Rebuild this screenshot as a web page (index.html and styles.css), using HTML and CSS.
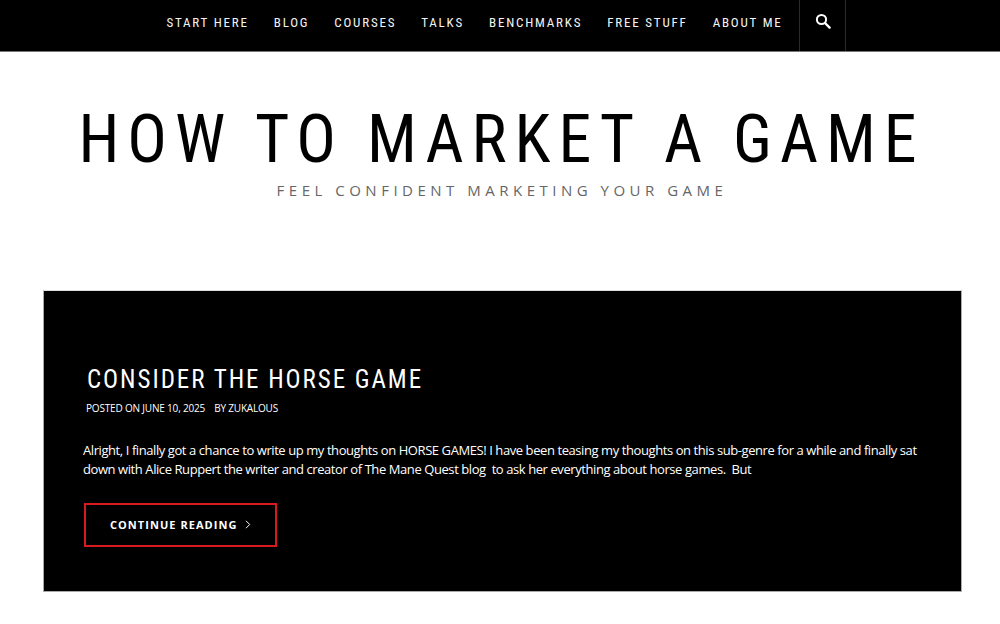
FILE: index.html
```html
<!DOCTYPE html>
<html lang="en">

<head>
    <meta charset="UTF-8">
    <meta name="viewport" content="width=device-width, initial-scale=1.0">
    <title>How To Market A Game</title>
    <link rel="stylesheet" href="styles.css">
</head>

<body>
    <nav class="topbar">
        <ul class="menu">
            <li><a href="#">Start Here</a></li>
            <li><a href="#">Blog</a></li>
            <li><a href="#">Courses</a></li>
            <li><a href="#">Talks</a></li>
            <li><a href="#">Benchmarks</a></li>
            <li><a href="#">Free Stuff</a></li>
            <li><a href="#">About Me</a></li>
        </ul>
        <button class="searchbtn" aria-label="Search">
            <svg width="16" height="16" viewBox="0 0 16 16">
                <circle cx="6.5" cy="6.5" r="4.6" fill="none" stroke="#fff" stroke-width="2"></circle>
                <path d="M10 10l4.6 4.6" stroke="#fff" stroke-width="2.4" stroke-linecap="round"></path>
            </svg>
        </button>
    </nav>

    <header class="masthead">
        <h1 class="sitename">How To Market A Game</h1>
        <p class="tagline">Feel confident marketing your game</p>
    </header>

    <main class="content">
        <article class="post">
            <h2 class="posttitle">Consider the Horse Game</h2>
            <div class="postmeta">
                <span>Posted on June 10, 2025</span>
                <span>By Zukalous</span>
            </div>
            <p class="excerpt">Alright, I finally got a chance to write up my thoughts on HORSE GAMES! I have been teasing my thoughts on this sub-genre for a while and finally sat down with Alice Ruppert the writer and creator of The Mane Quest blog&nbsp; to ask her everything about horse games.&nbsp; But</p>
            <a class="readmore" href="#">Continue Reading
                <svg width="6" height="9" viewBox="0 0 6 9">
                    <path d="M1 .8l3.7 3.7L1 8.2" fill="none" stroke="#fff" stroke-width="1"></path>
                </svg>
            </a>
        </article>
    </main>
</body>

</html>
```

FILE: styles.css
```css
* {
    margin: 0;
    padding: 0;
    box-sizing: border-box;
}

body {
    background-color: #fff;
    font-family: "Open Sans", "Liberation Sans", sans-serif;
    color: #000;
}

a {
    color: inherit;
    text-decoration: none;
}

.topbar {
    display: flex;
    justify-content: center;
    height: 52px;
    padding-left: 12px;
    background-color: #000;
    border-bottom: 1px solid #777;
}

.menu {
    display: flex;
    gap: 25px;
    align-items: center;
    list-style: none;
    padding: 0 16px 9px 0;
}

.menu a {
    font-family: "Roboto", sans-serif;
    font-stretch: 75%;
    font-size: 13px;
    letter-spacing: 1.8px;
    text-transform: uppercase;
    color: #f4f4f4;
}

.searchbtn {
    width: 47px;
    height: 51px;
    padding: 0 0 6px 1px;
    background: none;
    border: solid #2a2a2a;
    border-width: 0 1px;
}

.masthead {
    height: 238px;
    padding: 50px 0 0 3px;
    text-align: center;
}

.sitename {
    font-family: "Roboto", sans-serif;
    font-stretch: 75%;
    font-weight: 400;
    font-size: 66px;
    line-height: 76px;
    letter-spacing: 7.95px;
    text-transform: uppercase;
}

.tagline {
    padding-left: 1px;
    font-size: 15px;
    line-height: 24px;
    letter-spacing: 4.5px;
    text-transform: uppercase;
    color: #666;
}

.content {
    padding: 0 38px 0 43px;
}

.post {
    height: 302px;
    padding: 72px 39px 0;
    background-color: #000;
    border: 1px solid #aaa;
    border-top-color: #ddd;
    color: #fff;
}

.posttitle {
    margin-left: 4px;
    font-family: "Roboto", sans-serif;
    font-stretch: 75%;
    font-weight: 400;
    font-size: 25px;
    line-height: 34px;
    letter-spacing: 1.95px;
    text-transform: uppercase;
}

.postmeta {
    display: flex;
    gap: 9px;
    margin: 1px 0 0 3px;
    font-size: 10px;
    line-height: 20px;
    letter-spacing: -.18px;
    text-transform: uppercase;
}

.excerpt {
    margin-top: 23px;
    font-size: 13px;
    line-height: 19px;
    letter-spacing: -.42px;
}

.readmore {
    display: inline-flex;
    align-items: center;
    gap: 7px;
    width: 193px;
    height: 44px;
    margin: 24px 0 0 1px;
    padding: 0 0 2px 24px;
    border: 2px solid #d71a20;
    font-size: 11px;
    font-weight: 700;
    letter-spacing: 1.05px;
    text-transform: uppercase;
}
```
